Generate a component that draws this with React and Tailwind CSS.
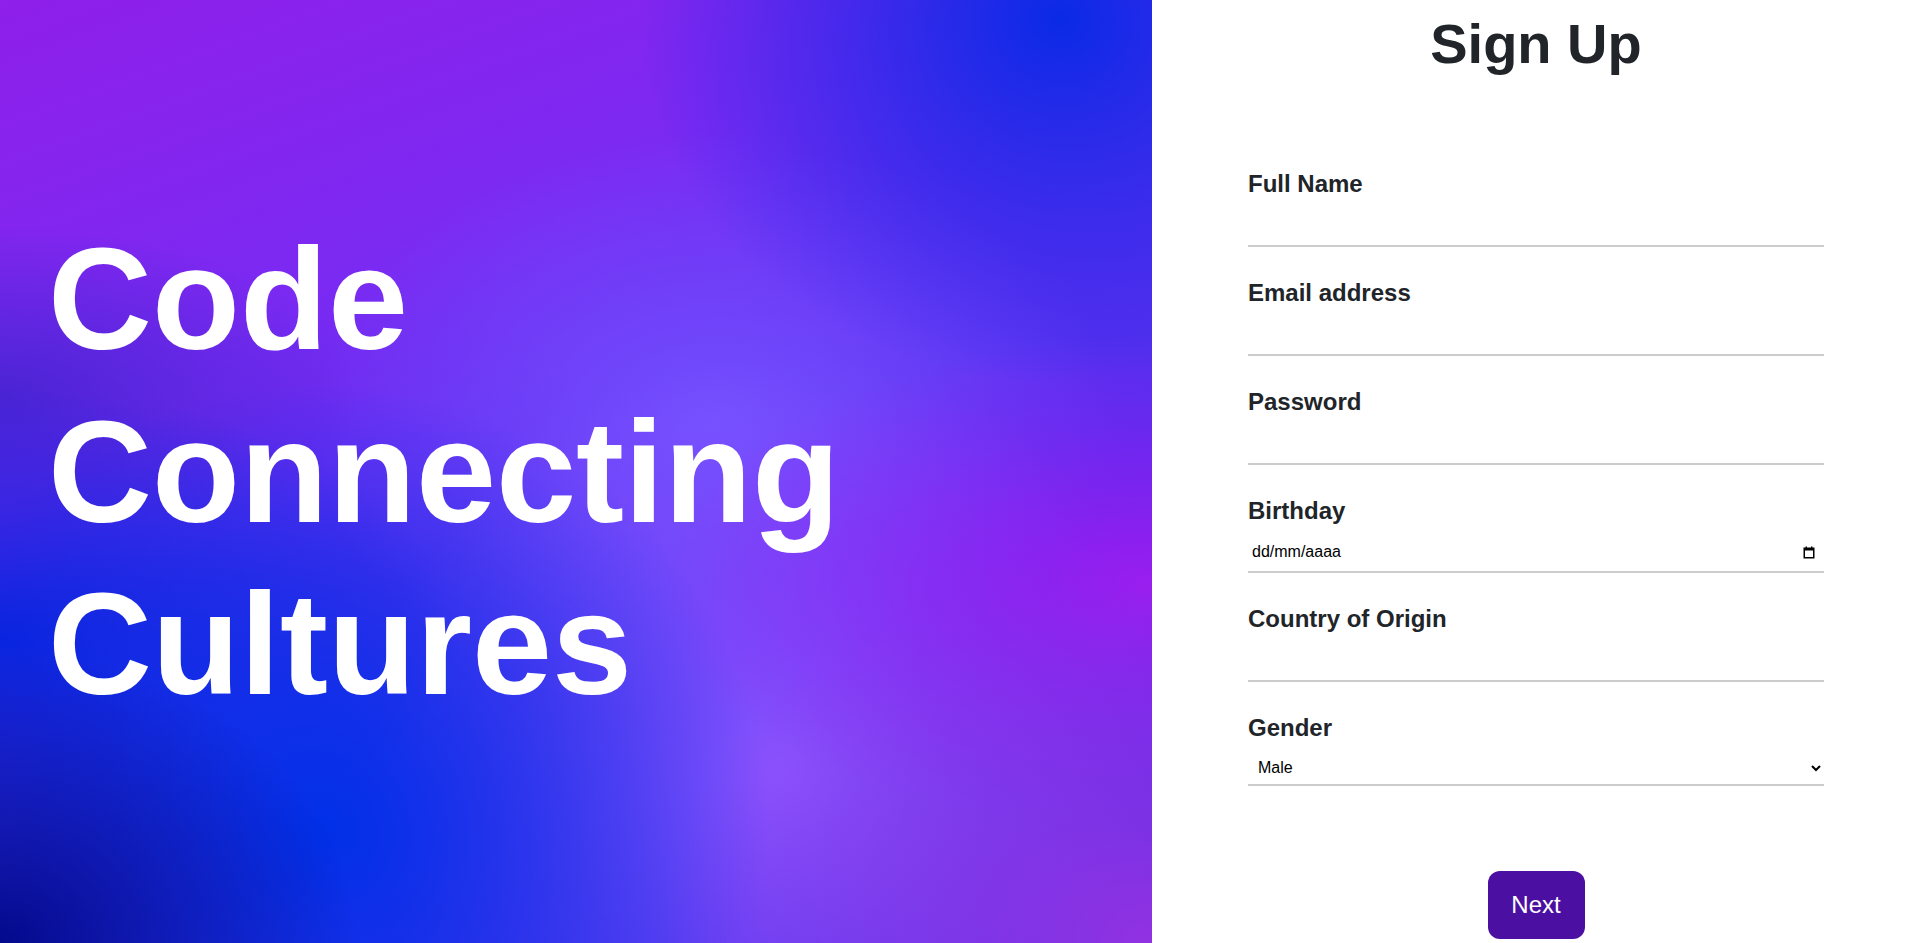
import React from 'react';

function CalendarIcon() {
    return (
        <svg width="14" height="14" viewBox="0 0 14 14" fill="none">
            <rect x="2.25" y="3.25" width="9.5" height="9.5" stroke="#000" strokeWidth="1.5" />
            <rect x="2" y="3" width="10" height="2.5" fill="#000" />
            <rect x="3.6" y="1.5" width="1.4" height="2" fill="#000" />
            <rect x="9" y="1.5" width="1.4" height="2" fill="#000" />
        </svg>
    );
}

function TextField({ label, type = 'text' }) {
    return (
        <div className="flex flex-col">
            <label className="text-[24px] leading-[1.2] font-bold text-[#212529]">{label}</label>
            <input
                type={type}
                className="mt-2 h-10 w-full border-b-2 border-[#cccccc] bg-transparent px-1 text-[16px] text-black outline-none"
            />
        </div>
    );
}

export default function App() {
    return (
        <div className="flex h-screen w-full overflow-hidden font-['Liberation_Sans',Arial,sans-serif]">
            {/* left hero */}
            <div className="flex w-[60%] flex-col justify-center pt-[3px] pl-[48px] bg-[radial-gradient(ellipse_at_92%_2%,#0a2ae6_0%,rgba(10,42,230,0)_28%),radial-gradient(ellipse_at_0%_100%,#020a8c_0%,rgba(2,10,140,0)_22%),radial-gradient(ellipse_at_100%_100%,#9232e2_0%,rgba(146,50,226,0)_30%),radial-gradient(ellipse_at_28%_88%,#0030e8_0%,rgba(0,48,232,0)_38%),radial-gradient(ellipse_at_0%_68%,#0a22dc_0%,rgba(10,34,220,0)_28%),radial-gradient(ellipse_at_0%_42%,#4a24d4_0%,rgba(74,36,212,0)_22%),radial-gradient(ellipse_at_100%_62%,#9a1cf0_0%,rgba(154,28,240,0)_30%),radial-gradient(ellipse_at_68%_82%,#8a55ff_0%,rgba(138,85,255,0)_38%),radial-gradient(ellipse_at_62%_45%,#7450ff_0%,rgba(116,80,255,0)_40%),linear-gradient(160deg,#8f1fea_0%,#7a2af2_30%,#4f30ee_60%,#3a2ae6_100%)]">
                <h2 className="text-[144px] leading-[1.2] font-bold text-white">
                    <span className="block">Code</span>
                    <span className="block">Connecting</span>
                    <span className="block">Cultures</span>
                </h2>
            </div>

            {/* right form */}
            <div className="flex w-[40%] flex-col items-center bg-white pt-[10px]">
                <div className="flex w-[576px] flex-1 flex-col">
                    <h1 className="text-center text-[56px] leading-[1.2] font-bold text-[#212529]">Sign Up</h1>

                    <form className="mt-[93px] flex flex-col gap-8">
                        <TextField label="Full Name" />
                        <TextField label="Email address" type="email" />
                        <TextField label="Password" type="password" />

                        <div className="flex flex-col">
                            <label className="text-[24px] leading-[1.2] font-bold text-[#212529]">Birthday</label>
                            <div className="mt-2 flex h-10 w-full items-center justify-between border-b-2 border-[#cccccc] pr-2 pl-1">
                                <span className="text-[16px] text-black">dd/mm/aaaa</span>
                                <CalendarIcon />
                            </div>
                        </div>

                        <TextField label="Country of Origin" />

                        <div className="flex flex-col">
                            <label className="text-[24px] leading-[1.2] font-bold text-[#212529]">Gender</label>
                            <select className="mt-2 h-[35px] w-full border-b-2 border-[#cccccc] bg-transparent pl-1.5 text-[16px] text-black outline-none">
                                <option>Male</option>
                                <option>Female</option>
                                <option>Other</option>
                            </select>
                        </div>
                    </form>

                    <div className="mt-[85px] flex justify-center">
                        <button
                            type="button"
                            className="flex h-[68px] w-[97px] items-center justify-center rounded-xl bg-[#4b0fa1] text-[24px] text-white"
                        >
                            Next
                        </button>
                    </div>
                </div>
            </div>
        </div>
    );
}
